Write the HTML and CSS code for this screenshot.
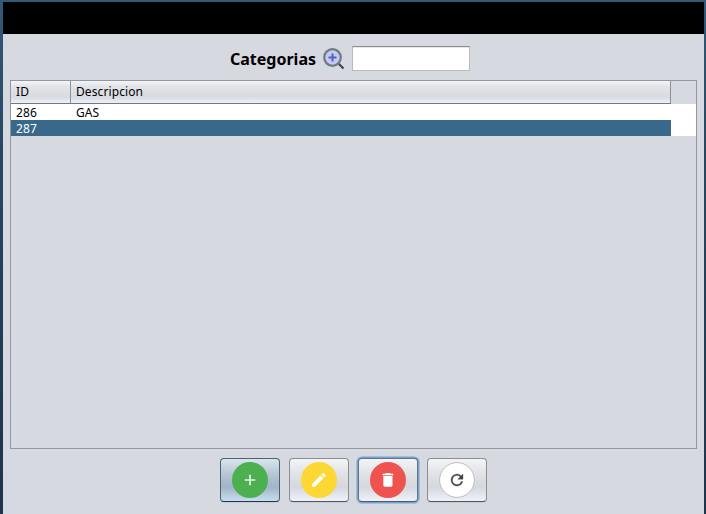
FILE: index.html
```html
<!DOCTYPE html>
<html lang="es">
<head>
<meta charset="utf-8">
<title>Categorias</title>
<link rel="stylesheet" href="styles.css">
</head>
<body>
<main class="window">
  <header class="titlebar"></header>
  <form class="search">
    <label class="search-label" for="q">Categorias</label>
    <svg class="search-icon" viewBox="0 0 22 22" width="22" height="22">
      <path d="M15.500 15.500L20.500 20.500" stroke="#37474f" stroke-width="2.200"/>
      <circle cx="9.500" cy="9.500" r="8.300" fill="#c5caf0" stroke="#6d7b83" stroke-width="2.200"/>
      <path d="M9.500 5.500v8M5.500 9.500h8" stroke="#5562c0" stroke-width="2"/>
    </svg>
    <input class="search-field" id="q" type="text">
  </form>
  <section class="table">
    <div class="head">
      <div class="th th-id">ID</div>
      <div class="th th-desc">Descripcion</div>
    </div>
    <div class="rows">
      <div class="row"><div class="td td-id">286</div><div class="td">GAS</div></div>
      <div class="row selected"><div class="td td-id">287</div><div class="td"></div></div>
    </div>
  </section>
  <footer class="actions">
    <button class="btn btn-default" aria-label="Agregar">
      <svg viewBox="0 0 36 36" width="36" height="36"><circle cx="18" cy="18" r="18" fill="#4caf50"/><path d="M18 12.700v10.600M12.700 18h10.600" stroke="#e6f5e7" stroke-width="1.700"/></svg>
    </button>
    <button class="btn" aria-label="Editar">
      <svg viewBox="0 0 36 36" width="36" height="36"><circle cx="18" cy="18" r="18" fill="#fdd835"/><path transform="translate(8.800 8.800) scale(.76)" fill="#fff" d="M3 17.250V21h3.750L17.810 9.940l-3.750-3.750L3 17.250zM20.710 7.040a1 1 0 0 0 0-1.410l-2.340-2.340a1 1 0 0 0-1.410 0l-1.830 1.830 3.750 3.750 1.830-1.830z"/></svg>
    </button>
    <button class="btn btn-focus" aria-label="Eliminar">
      <svg viewBox="0 0 36 36" width="36" height="36"><circle cx="18" cy="18" r="18" fill="#ef5350"/><path transform="translate(8.800 8.800) scale(.76)" fill="#fff" d="M6 19c0 1.100.9 2 2 2h8c1.100 0 2-.9 2-2V7H6v12zM19 4h-3.500l-1-1h-5l-1 1H5v2h14V4z"/></svg>
    </button>
    <button class="btn" aria-label="Actualizar">
      <svg viewBox="0 0 36 36" width="36" height="36"><circle cx="18" cy="18" r="17.400" fill="#fff" stroke="#bdbdbd"/><path transform="translate(9 9) scale(.75)" fill="#424242" stroke="#424242" stroke-width=".4" d="M17.650 6.350A7.960 7.960 0 0 0 12 4a8 8 0 1 0 7.730 10h-2.080A6 6 0 1 1 12 6c1.660 0 3.140.69 4.220 1.780L13 11h7V4l-2.350 2.350z"/></svg>
    </button>
  </footer>
</main>
</body>
</html>
```
FILE: styles.css
```css
* { box-sizing: border-box; }

body {
  margin: 0;
  height: 514px;
  padding: 2px 2px 0 3px;
  overflow: hidden;
  background: linear-gradient(#315a79, #28475f 30%, #1d344c);
  font: 12px/16px "Noto Sans", "Open Sans", sans-serif;
  color: #000;
}

.window {
  height: 512px;
  display: flex;
  flex-direction: column;
  background: #d6d9e0;
}

.titlebar { height: 32px; background: #000; }

.search {
  height: 46px;
  margin: 0;
  padding: 3px 0 0 227px;
  display: flex;
  align-items: center;
}

.search-label {
  width: 86px;
  font-size: 16px;
  font-weight: 700;
  line-height: 22px;
  white-space: nowrap;
}

.search-icon { display: block; margin: 0 7px; }

.search-field {
  width: 118px;
  height: 25px;
  padding: 0 6px;
  border: 1px solid #b8babf;
  border-top-color: #8d8e91;
  border-radius: 0;
  background: #fff;
  box-shadow: inset 0 1px #e5e6e8;
  outline: 0;
}

.table {
  width: 687px;
  height: 369px;
  margin-left: 7px;
  border: 1px solid #9297a1;
  letter-spacing: .1px;
}

.head { display: flex; width: 660px; height: 23px; border-bottom: 1px solid #74777e; }

.th {
  padding: 3px 5px 0;
  border-right: 1px solid #8e9199;
  background: linear-gradient(#f4f5f8, #e2e4e8 25%, #dcdee3 55%, #d7dae1 72%, #edf0f8);
}

.th-id { width: 60px; }
.th-desc { flex: 1; }

.rows { background: #fff; }
.row { display: flex; width: 660px; height: 16px; }
.td { padding: 0 5px; line-height: 17px; }
.td-id { width: 60px; }
.selected { background: #39698a; color: #fff; }

.actions { display: flex; gap: 9px; padding: 9px 0 0 217px; }

.btn {
  display: grid;
  place-items: center;
  width: 60px;
  height: 44px;
  padding: 0;
  border: 1px solid #8b8d93;
  border-bottom-color: #54565b;
  border-radius: 4px;
  background: linear-gradient(#f3f4f7, #e1e3e7 35%, #d9dbe1 55%, #d5d8df 68%, #f0f2fa);
  box-shadow: 0 1px #c8cbd2;
}

.btn svg { display: block; }

.btn-default {
  border-color: #4a6175;
  border-bottom-color: #1c3850;
  background: linear-gradient(#dbe5ec, #b7c8d5 35%, #a8bbca 55%, #a2b6c6 68%, #c8def0);
}

.btn-focus { border-color: #62738a; border-bottom-color: #4c5968; box-shadow: 0 0 0 1.500px #73a4d1; }
```
